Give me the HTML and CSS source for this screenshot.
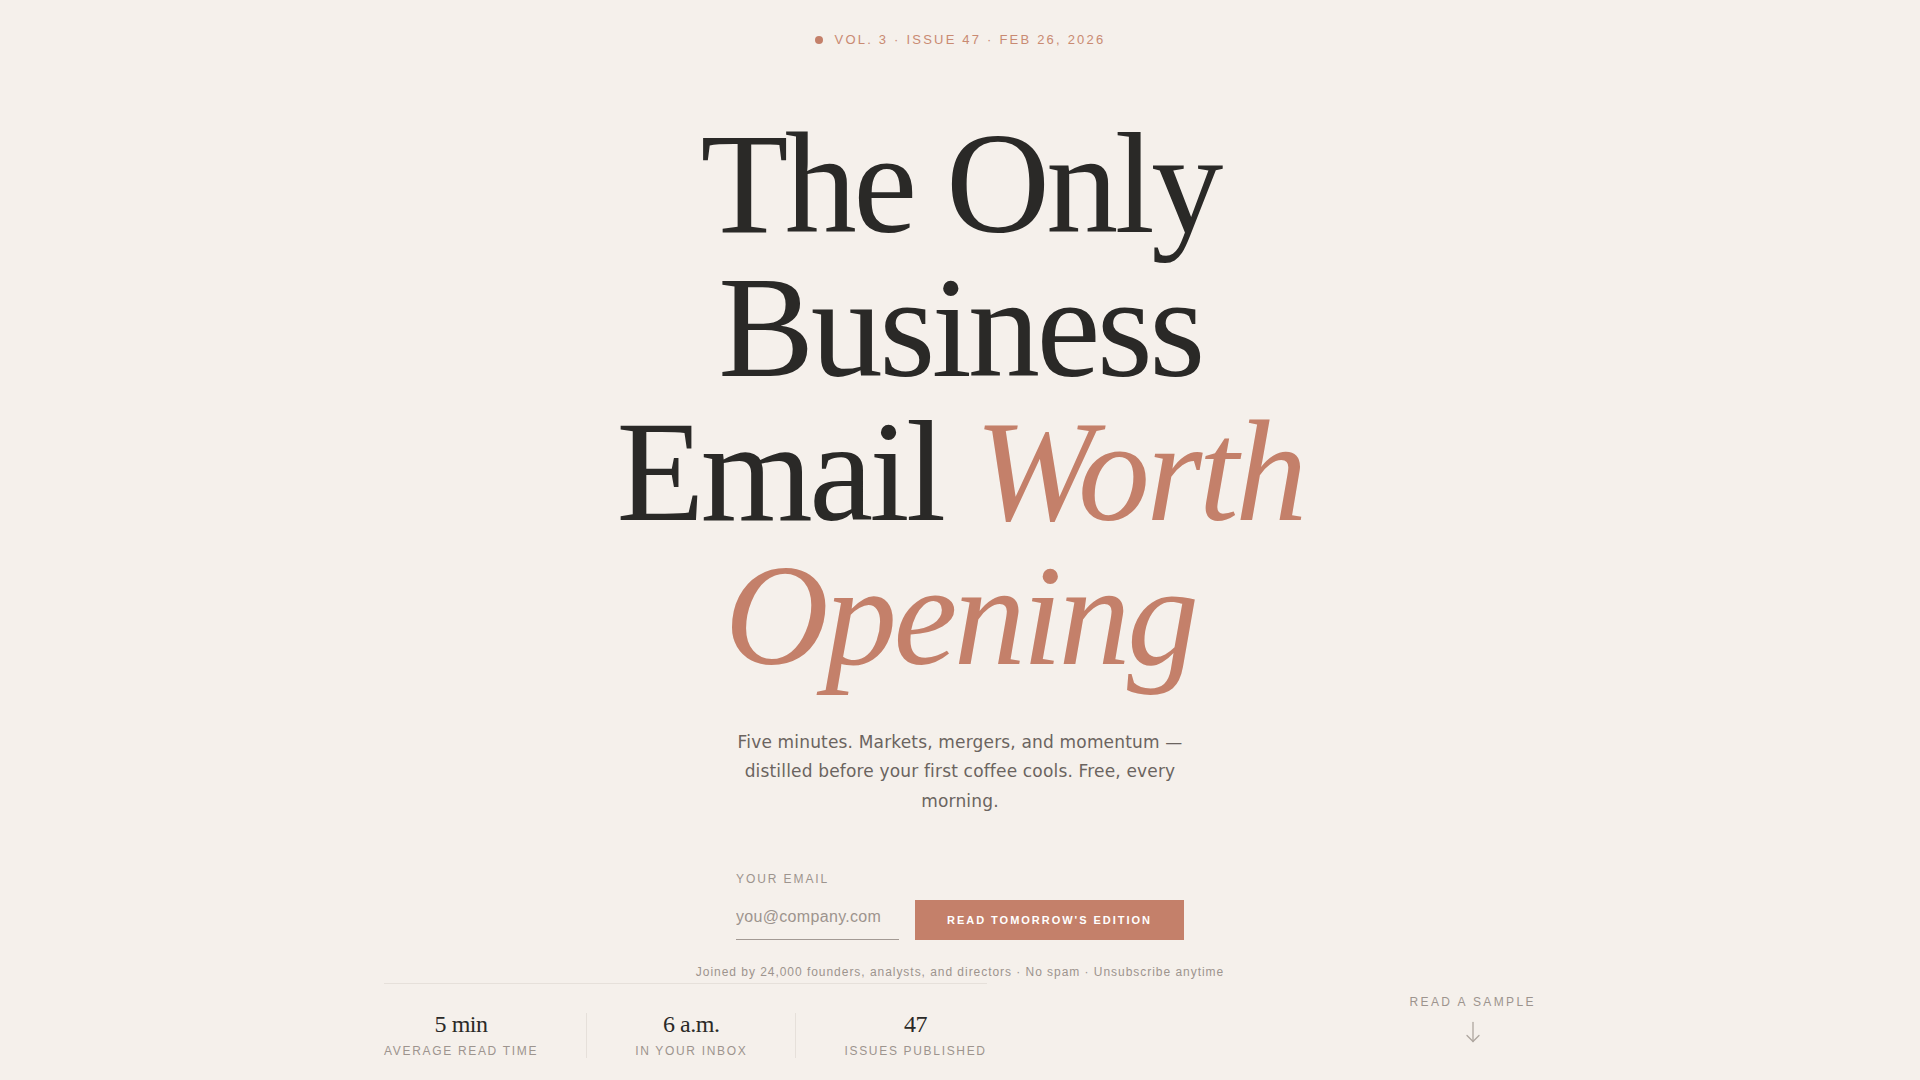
FILE: index.html
```html
<!DOCTYPE html>
<html lang="en">
<head>
<meta charset="utf-8">
<title>The Only Business Email Worth Opening</title>
<link rel="stylesheet" href="styles.css">
</head>
<body>
<main class="hero">
  <div class="meta"><span class="dot"></span>VOL. 3 · ISSUE 47 · FEB 26, 2026</div>
  <h1 class="title">The Only<br>Business<br>Email <em>Worth</em><br><em>Opening</em></h1>
  <p class="lede">Five minutes. Markets, mergers, and momentum — distilled before your first coffee cools. Free, every morning.</p>
  <form class="signup">
    <div class="field">
      <label class="field-label" for="email">YOUR EMAIL</label>
      <input class="field-input" id="email" type="email" placeholder="you@company.com">
    </div>
    <button class="cta" type="button">READ TOMORROW'S EDITION</button>
  </form>
  <p class="note">Joined by 24,000 founders, analysts, and directors · No spam · Unsubscribe anytime</p>
  <div class="bottom">
    <div class="stats">
      <div class="stat"><div class="stat-num">5 min</div><div class="stat-label">AVERAGE READ TIME</div></div>
      <div class="stat"><div class="stat-num">6 a.m.</div><div class="stat-label">IN YOUR INBOX</div></div>
      <div class="stat"><div class="stat-num">47</div><div class="stat-label">ISSUES PUBLISHED</div></div>
    </div>
    <a class="sample" href="#sample">
      <span class="sample-text">READ A SAMPLE</span>
      <svg class="sample-arrow" width="22" height="22" viewBox="0 0 22 22" fill="none" stroke="#aea69f" stroke-width="1.3" stroke-linecap="round" stroke-linejoin="round"><path d="M11 1.5V20.5"/><path d="M5 14.5L11 20.5L17 14.5"/></svg>
    </a>
  </div>
</main>
</body>
</html>
```
FILE: styles.css
```css
html, body {
  margin: 0;
  padding: 0;
  background: #f5f0eb;
}

body {
  font-family: "Liberation Sans", Arial, sans-serif;
  color: #2a2927;
}

.hero {
  height: 1080px;
  box-sizing: border-box;
  padding-top: 32px;
  display: flex;
  flex-direction: column;
  align-items: center;
  overflow: hidden;
}

.meta {
  display: flex;
  align-items: center;
  font-size: 13px;
  line-height: 16px;
  letter-spacing: 0.17em;
  color: #c98a72;
}

.dot {
  width: 8px;
  height: 8px;
  border-radius: 50%;
  background: #c4806a;
  margin-right: 12px;
}

.title {
  margin: 64px 0 0;
  font-family: "Liberation Serif", "Times New Roman", serif;
  font-weight: 400;
  font-size: 144px;
  line-height: 144px;
  letter-spacing: -0.025em;
  text-align: center;
  color: #2a2927;
}

.title em {
  font-style: italic;
  color: #c4806a;
}

.lede {
  margin: 40px 0 0;
  max-width: 480px;
  font-family: "DejaVu Sans", Verdana, sans-serif;
  font-size: 17px;
  line-height: 29.4px;
  letter-spacing: 0.01em;
  text-align: center;
  color: #6b645f;
}

.signup {
  margin: 56px 0 0;
  display: flex;
  align-items: flex-end;
  gap: 16px;
}

.field {
  display: flex;
  flex-direction: column;
  gap: 14px;
}

.field-label {
  font-size: 12px;
  line-height: 14px;
  letter-spacing: 0.16em;
  color: #9d948e;
}

.field-input {
  width: 163px;
  height: 40px;
  box-sizing: border-box;
  margin: 0;
  padding: 0 0 5px;
  border: none;
  border-bottom: 1px solid #a39a94;
  background: transparent;
  font-family: "Liberation Sans", Arial, sans-serif;
  font-size: 16px;
  letter-spacing: 0.02em;
  color: #2a2927;
  outline: none;
}

.field-input::placeholder {
  color: #9d948e;
}

.cta {
  height: 40px;
  margin: 0;
  padding: 0 32px;
  border: none;
  background: #c4806a;
  color: #ffffff;
  font-family: "Liberation Sans", Arial, sans-serif;
  font-weight: 700;
  font-size: 11px;
  letter-spacing: 0.18em;
  cursor: pointer;
}

.note {
  margin: 25px 0 0;
  font-size: 12px;
  line-height: 14px;
  letter-spacing: 0.08em;
  color: #9d948e;
}

.bottom {
  margin-top: 4px;
  width: 1152px;
  display: flex;
  justify-content: space-between;
  align-items: flex-start;
}

.stats {
  display: flex;
  border-top: 1px solid #e6e0da;
  padding-top: 29px;
}

.stat {
  display: flex;
  flex-direction: column;
  align-items: center;
  padding: 0 48px;
  border-left: 1px solid #e6e0da;
}

.stat:first-child {
  padding-left: 0;
  border-left: none;
}

.stat:last-child {
  padding-right: 0;
}

.stat-num {
  font-family: "Liberation Serif", "Times New Roman", serif;
  font-size: 24px;
  line-height: 22px;
  letter-spacing: -0.02em;
  color: #2a2927;
}

.stat-label {
  margin-top: 9px;
  font-size: 12px;
  line-height: 14px;
  letter-spacing: 0.14em;
  color: #9d948e;
}

.sample {
  display: flex;
  flex-direction: column;
  align-items: center;
  gap: 12px;
  padding-top: 12px;
  text-decoration: none;
}

.sample-text {
  font-size: 12px;
  line-height: 14px;
  letter-spacing: 0.2em;
  color: #9d948e;
}

.sample-arrow {
  display: block;
}
```
